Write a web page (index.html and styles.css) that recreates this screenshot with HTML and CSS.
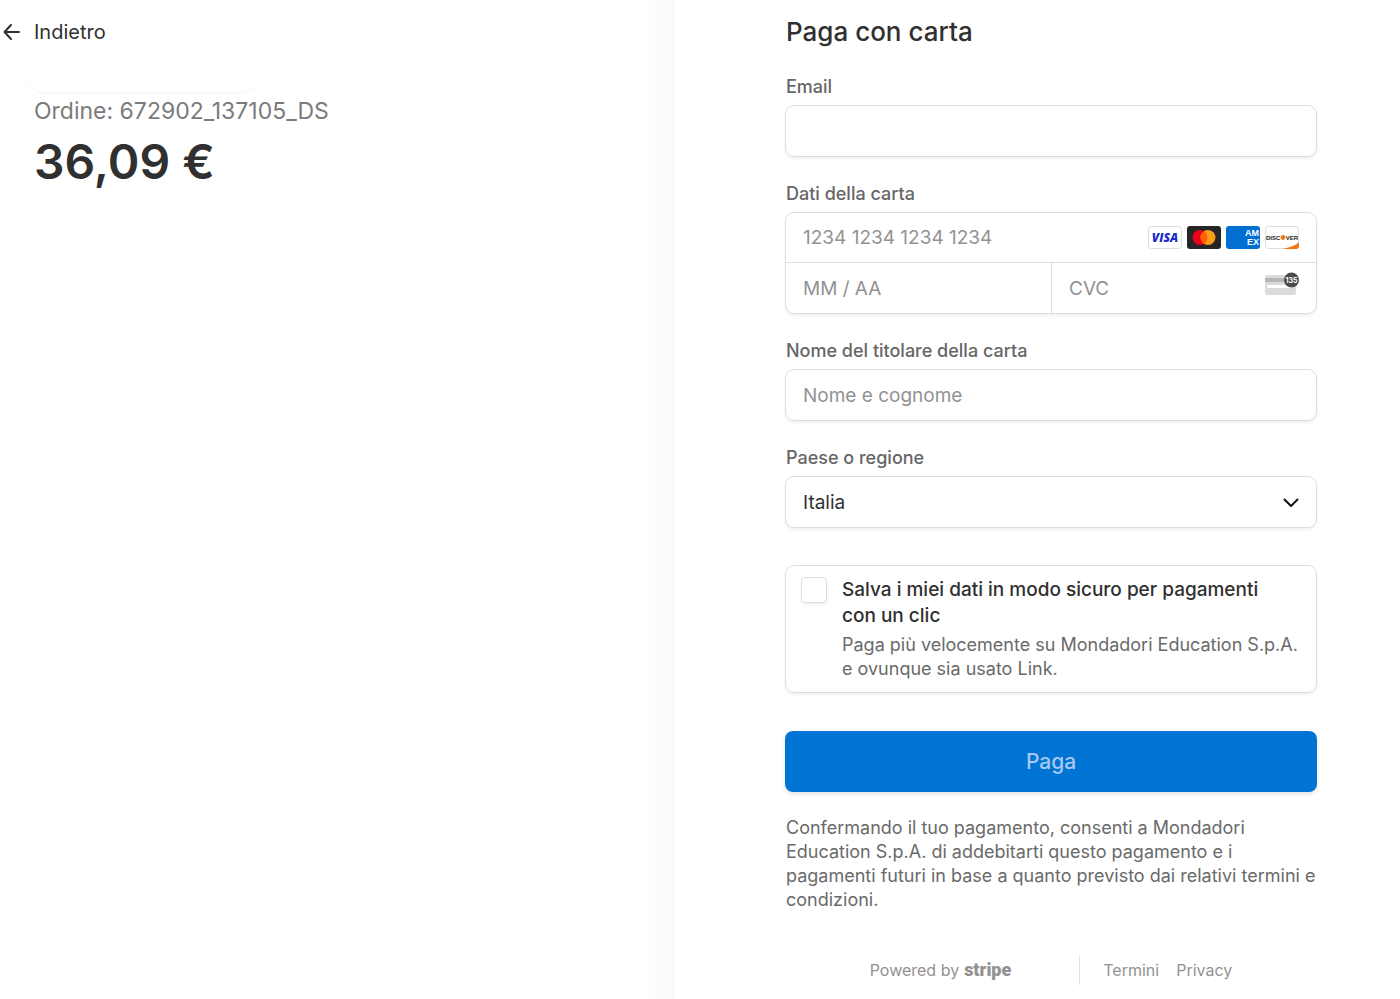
FILE: index.html
```
<!DOCTYPE html>
<html lang="it">

<head>
    <meta charset="UTF-8">
    <meta name="viewport" content="width=device-width, initial-scale=1.0">
    <title>Paga con carta</title>
    <link rel="stylesheet" href="styles.css">
</head>

<body>
    <div class="checkout">
        <section class="summary">
            <a class="back" href="#">
                <svg class="back-icon" width="18" height="18" viewBox="0 0 18 18" fill="none" stroke="#303030" stroke-width="2" stroke-linecap="round" stroke-linejoin="round">
                    <path d="M16 9H2M8 2L1.500 9L8 16" />
                </svg>
                Indietro
            </a>
            <div class="merchant"></div>
            <p class="order">Ordine: 672902_137105_DS</p>
            <p class="amount">36,09 €</p>
        </section>

        <main class="payment">
            <form class="payment-form">
                <h1>Paga con carta</h1>

                <div class="field">
                    <label for="email">Email</label>
                    <input class="input" type="email" id="email">
                </div>

                <div class="field">
                    <label for="card-number">Dati della carta</label>
                    <div class="card-group">
                        <div class="card-cell card-number">
                            <input type="text" id="card-number" placeholder="1234 1234 1234 1234">
                            <div class="brands">
                                <svg width="34" height="23" viewBox="0 0 34 23">
                                    <rect x="0.500" y="0.500" width="33" height="22" rx="3" fill="#fff" stroke="#dcdcdc" />
                                    <text class="visa" x="17" y="16" text-anchor="middle">VISA</text>
                                </svg>
                                <svg width="34" height="23" viewBox="0 0 34 23">
                                    <rect width="34" height="23" rx="3" fill="#252525" />
                                    <circle cx="13" cy="11.500" r="7.500" fill="#eb001b" />
                                    <circle cx="21" cy="11.500" r="7.500" fill="#f79e1b" />
                                    <path d="M17 5.200a7.500 7.500 0 0 1 0 12.600a7.500 7.500 0 0 1 0-12.600z" fill="#ff5f00" />
                                </svg>
                                <svg width="34" height="23" viewBox="0 0 34 23">
                                    <rect width="34" height="23" rx="3" fill="#016fd0" />
                                    <text class="amex" x="33" y="10" text-anchor="end">AM</text>
                                    <text class="amex" x="33" y="19" text-anchor="end">EX</text>
                                </svg>
                                <svg width="34" height="23" viewBox="0 0 34 23">
                                    <rect x="0.500" y="0.500" width="33" height="22" rx="3" fill="#fff" stroke="#dcdcdc" />
                                    <path d="M19 22.500Q28 21 34 16.500V20a3 3 0 0 1-3 3H19z" fill="#f27712" />
                                    <text class="discover" x="1" y="14">DISC</text>
                                    <circle cx="18" cy="11.500" r="2.400" fill="#f27712" />
                                    <text class="discover" x="33" y="14" text-anchor="end">VER</text>
                                </svg>
                            </div>
                        </div>
                        <div class="card-cell">
                            <input type="text" placeholder="MM / AA" aria-label="Scadenza">
                        </div>
                        <div class="card-cell card-cvc">
                            <input type="text" placeholder="CVC" aria-label="CVC">
                            <svg class="cvc-icon" width="34" height="24" viewBox="0 0 34 24">
                                <rect y="3" width="31" height="20" rx="2" fill="#dadada" />
                                <rect y="6" width="31" height="4" fill="#b5b5b5" />
                                <rect x="2" y="13" width="26" height="3" rx="1" fill="#fff" />
                                <circle cx="26.500" cy="8" r="7.500" fill="#4a4a4a" />
                                <text class="cvc-digits" x="26.500" y="11" text-anchor="middle">135</text>
                            </svg>
                        </div>
                    </div>
                </div>

                <div class="field">
                    <label for="name">Nome del titolare della carta</label>
                    <input class="input" type="text" id="name" placeholder="Nome e cognome">
                </div>

                <div class="field">
                    <label for="country">Paese o regione</label>
                    <div class="select-wrap">
                        <select class="input" id="country">
                            <option>Italia</option>
                        </select>
                        <svg class="chevron" width="16" height="10" viewBox="0 0 16 10" fill="none" stroke="#111" stroke-width="2" stroke-linecap="round" stroke-linejoin="round">
                            <path d="M1.500 1.500L8 8L14.500 1.500" />
                        </svg>
                    </div>
                </div>

                <div class="save-box">
                    <input type="checkbox" id="save">
                    <div class="save-text">
                        <label for="save">Salva i miei dati in modo sicuro per pagamenti con un clic</label>
                        <p>Paga più velocemente su Mondadori Education S.p.A. e ovunque sia usato Link.</p>
                    </div>
                </div>

                <button class="pay" type="submit">Paga</button>

                <p class="terms">Confermando il tuo pagamento, consenti a Mondadori Education S.p.A. di addebitarti questo pagamento e i pagamenti futuri in base a quanto previsto dai relativi termini e condizioni.</p>
            </form>

            <footer class="footer">
                <a class="powered" href="#">Powered by <span class="stripe">stripe</span></a>
                <nav class="footer-links">
                    <a href="#">Termini</a>
                    <a href="#">Privacy</a>
                </nav>
            </footer>
        </main>
    </div>
</body>

</html>
```
FILE: styles.css
```
* {
    box-sizing: border-box;
    margin: 0;
}

body {
    font-family: Inter, "Liberation Sans", sans-serif;
    background: #fff;
    color: #303030;
}

a {
    color: inherit;
    text-decoration: none;
}

.checkout {
    display: grid;
    grid-template-columns: minmax(0, 675fr) minmax(0, 725fr);
    min-height: 100vh;
}

/* left side */
.summary {
    padding: 20px 3px;
    background: linear-gradient(to left, #f9f9f9, #fff 28px);
}

.back {
    display: flex;
    align-items: center;
    gap: 13px;
    font-size: 20px;
    line-height: 24px;
}

.merchant {
    width: 230px;
    height: 36px;
    margin: 12px 0 5px 24px;
    border-radius: 16px;
    box-shadow: 0 2px 3px -1px rgba(0, 0, 0, 0.05);
}

.order {
    padding-left: 31px;
    font-size: 23px;
    line-height: 28px;
    color: #7b7b7b;
}

.amount {
    padding-left: 31px;
    font-size: 48px;
    font-weight: 600;
    line-height: 74px;
}

/* right side */
.payment {
    padding: 15px 83px 14px 110px;
}

h1 {
    margin-bottom: 27px;
    padding-left: 1px;
    font-size: 26px;
    font-weight: 500;
    line-height: 33px;
}

.field {
    margin-bottom: 25px;
}

.field label {
    display: block;
    margin-bottom: 6px;
    padding-left: 1px;
    font-size: 18px;
    font-weight: 500;
    line-height: 24px;
    color: #666;
}

input,
select,
button {
    font-family: inherit;
    color: #303030;
}

input::placeholder {
    color: #929292;
    opacity: 1;
}

.input {
    display: block;
    appearance: none;
    width: 100%;
    height: 52px;
    padding: 0 17px;
    border: 1px solid #dedede;
    border-radius: 9px;
    background: #fff;
    box-shadow: 0 2px 3px rgba(0, 0, 0, 0.06);
    font-size: 19px;
}

.card-group {
    display: grid;
    grid-template-columns: 1fr 1fr;
    border: 1px solid #dedede;
    border-radius: 9px;
    box-shadow: 0 2px 3px rgba(0, 0, 0, 0.06);
}

.card-cell {
    display: flex;
    align-items: center;
    min-width: 0;
    height: 50px;
    padding: 0 17px;
}

.card-cell input {
    flex: 1;
    min-width: 0;
    padding: 0;
    border: none;
    background: none;
    font-size: 19px;
}

.card-number {
    grid-column: 1 / 3;
    border-bottom: 1px solid #dedede;
}

.card-cvc {
    border-left: 1px solid #dedede;
}

.brands {
    display: flex;
    gap: 5px;
}

.visa {
    font: italic 800 12px "Open Sans", sans-serif;
    fill: #1a2cc8;
}

.amex {
    font: 700 9px "Liberation Sans", sans-serif;
    fill: #fff;
}

.discover {
    font: 700 6px "Liberation Sans", sans-serif;
    fill: #222;
}

.cvc-icon {
    margin-bottom: 8px;
}

.cvc-digits {
    font: 700 7px Inter, sans-serif;
    fill: #fff;
}

.select-wrap {
    position: relative;
}

.chevron {
    position: absolute;
    top: 22px;
    right: 18px;
    pointer-events: none;
}

.save-box {
    display: flex;
    gap: 15px;
    margin: 37px 0 38px;
    padding: 11px 15px;
    border: 1px solid #dedede;
    border-radius: 9px;
    box-shadow: 0 2px 3px rgba(0, 0, 0, 0.06);
}

.save-box input {
    flex: none;
    appearance: none;
    width: 26px;
    height: 26px;
    border: 1px solid #dedede;
    border-radius: 4px;
    box-shadow: 0 2px 3px rgba(0, 0, 0, 0.06);
}

.save-text label {
    display: block;
    margin-bottom: 4px;
    padding-right: 24px;
    font-size: 19px;
    font-weight: 500;
    line-height: 26px;
}

.save-text p,
.terms {
    font-size: 18px;
    line-height: 24px;
    color: #6a6a6a;
}

.terms {
    padding-left: 1px;
}

.pay {
    display: block;
    width: 100%;
    height: 61px;
    margin-bottom: 24px;
    border: none;
    border-radius: 8px;
    background: #0074d4;
    box-shadow: 0 2px 4px rgba(0, 0, 0, 0.12);
    font-size: 21px;
    font-weight: 500;
    color: #a9c9f0;
    cursor: pointer;
}

.footer {
    display: flex;
    justify-content: center;
    margin-top: 43px;
    font-size: 16px;
    line-height: 30px;
    color: #929292;
}

.powered {
    display: flex;
    gap: 5px;
    padding-right: 68px;
    border-right: 1px solid #e3e3e3;
}

.stripe {
    font-family: Roboto, sans-serif;
    font-size: 18px;
    font-weight: 900;
}

.footer-links {
    display: flex;
    gap: 17px;
    padding-left: 23px;
}
```
